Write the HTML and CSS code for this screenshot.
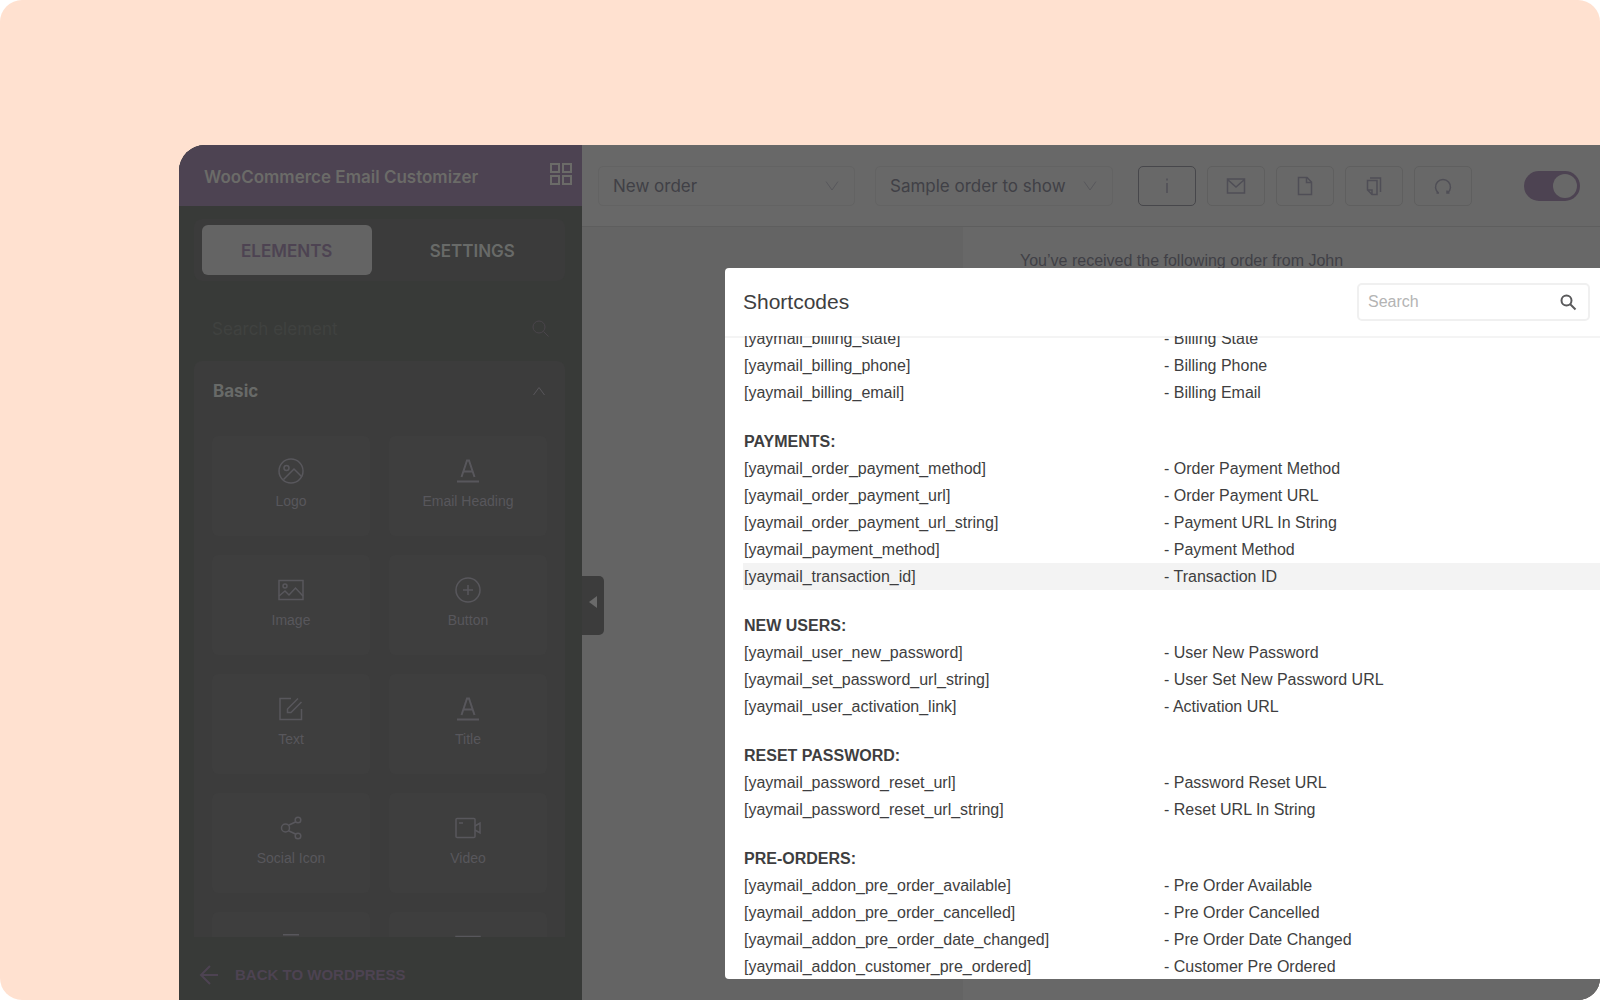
FILE: index.html
```html
<!DOCTYPE html>
<html lang="en">
<head>
<meta charset="utf-8">
<title>WooCommerce Email Customizer</title>
<link rel="stylesheet" href="styles.css">
</head>
<body>
<div class="stage">
  <div class="app">
    <aside class="sidebar">
      <header class="brand">
        <h1 class="brand-title">WooCommerce Email Customizer</h1>
        <button class="icon-button" type="button" aria-label="Templates">
          <svg width="22" height="22" viewBox="0 0 22 22" fill="none" stroke="currentColor" stroke-width="2"><path d="M1 1h8v8H1zM13 1h8v8h-8zM1 13h8v8H1zM13 13h8v8h-8z"/></svg>
        </button>
      </header>
      <div class="sidebar-body">
        <div class="tabs">
          <button class="tab tab-active" type="button">ELEMENTS</button>
          <button class="tab" type="button">SETTINGS</button>
        </div>
        <div class="element-search">
          <input class="element-input" type="text" placeholder="Search element" aria-label="Search element">
          <svg width="17" height="17" viewBox="0 0 17 17" fill="none" stroke="currentColor" stroke-width="1"><circle cx="7" cy="7" r="6"/><path d="M11.500 11.500L16.500 16.500"/></svg>
        </div>
        <section class="panel">
          <button class="panel-head" type="button">Basic
            <svg width="12" height="10" viewBox="0 0 12 10" fill="none" stroke="currentColor" stroke-width="1"><path d="M.5 9L6 1.500 11.500 9"/></svg>
          </button>
          <div class="elements">
            <button class="element" type="button">
              <svg class="element-icon" viewBox="0 0 26 26"><circle cx="13" cy="13" r="12"/><circle cx="8.500" cy="10" r="2.500"/><path d="M5.500 21.500L16 11l8 8"/></svg>Logo</button>
            <button class="element" type="button">
              <svg class="element-icon" viewBox="0 0 26 26"><path stroke-width="2" d="M6.500 19L12 2.500h2L19.500 19M8.500 13.500h9M2 23.500h22"/></svg>Email Heading</button>
            <button class="element" type="button">
              <svg class="element-icon" viewBox="0 0 26 26"><rect x="1" y="3.500" width="24" height="19"/><circle cx="7" cy="9" r="2"/><path d="M1 19l6-5 4 4 6.500-7L25 19"/></svg>Image</button>
            <button class="element" type="button">
              <svg class="element-icon" viewBox="0 0 26 26"><circle cx="13" cy="13" r="12"/><path d="M13 8v10M8 13h10"/></svg>Button</button>
            <button class="element" type="button">
              <svg class="element-icon" viewBox="0 0 26 26"><path d="M13 2.500H2v21h21.500V13M23.500 6L13 16.500H9.500V13L20 2.500"/></svg>Text</button>
            <button class="element" type="button">
              <svg class="element-icon" viewBox="0 0 26 26"><path stroke-width="2" d="M6.500 19L12 2.500h2L19.500 19M8.500 13.500h9M2 23.500h22"/></svg>Title</button>
            <button class="element" type="button">
              <svg class="element-icon" viewBox="0 0 26 26"><circle cx="7.500" cy="13" r="4"/><circle cx="20" cy="5" r="2.800"/><circle cx="20" cy="21" r="2.800"/><path d="M10.500 10.300L18 6.700M10.500 15.700L18 19.300"/></svg>Social Icon</button>
            <button class="element" type="button">
              <svg class="element-icon" viewBox="0 0 26 26"><rect x="1" y="3.500" width="19" height="19" rx="1"/><path d="M4 8h4M20 11l5-3v10l-5-3"/></svg>Video</button>
            <button class="element" type="button" aria-label="Divider">
              <svg class="element-icon" viewBox="0 0 26 26"><path d="M5 .8h16M5 7h16M5 12h16"/></svg></button>
            <button class="element" type="button" aria-label="Columns">
              <svg class="element-icon" viewBox="0 0 26 26"><rect x="1" y="2.500" width="24" height="19"/></svg></button>
          </div>
        </section>
      </div>
      <footer class="sidebar-foot">
        <a class="back-link" href="#">
          <svg width="20" height="20" viewBox="0 0 20 20" fill="none" stroke="currentColor" stroke-width="2"><path d="M19 10H2M11 1L2 10l9 9"/></svg>
          BACK TO WORDPRESS
        </a>
      </footer>
    </aside>

    <main class="workspace">
      <div class="toolbar">
        <div class="select select-template">
          <select aria-label="Email template"><option>New order</option></select>
          <svg class="chevron" viewBox="0 0 14 10"><path d="M1 .5l6 8.500 6-8.500"/></svg>
        </div>
        <div class="select select-order">
          <select aria-label="Sample order"><option>Sample order to show</option></select>
          <svg class="chevron" viewBox="0 0 14 10"><path d="M1 .5l6 8.500 6-8.500"/></svg>
        </div>
        <div class="tools">
          <button class="tool tool-active" type="button" aria-label="Shortcodes"><svg viewBox="0 0 20 20"><path d="M10 7v10M10 2.500v2"/></svg></button>
          <button class="tool" type="button" aria-label="Send test email"><svg viewBox="0 0 20 20"><path d="M1.500 3h17v14h-17zM1.500 3.500L10 11l8.500-7.500"/></svg></button>
          <button class="tool" type="button" aria-label="Blank page"><svg viewBox="0 0 20 20"><path d="M3.500 1.500H12L16.500 6v12.500h-13zM11.500 1.500v5h5"/></svg></button>
          <button class="tool" type="button" aria-label="Copy template"><svg viewBox="0 0 20 20"><path d="M3.500 4.500H13v14H8L3.500 14zM3.500 14H8v4.500M6 2h10.500v14"/></svg></button>
          <button class="tool" type="button" aria-label="Reset"><svg viewBox="0 0 20 20"><path d="M5.500 17A7.500 7.500 0 1 1 14.500 17M3.500 17h2.500M14 14.500V17h2.500"/></svg></button>
        </div>
        <input class="switch" type="checkbox" aria-label="Enable email" checked>
      </div>
      <div class="canvas">
        <div class="mail"><p class="mail-text">You’ve received the following order from John</p></div>
      </div>
      <button class="collapse" type="button" aria-label="Collapse sidebar"><svg width="8" height="12" viewBox="0 0 8 12" fill="currentColor"><path d="M8 0v12L0 6z"/></svg></button>
    </main>

    <section class="modal" role="dialog" aria-labelledby="modal-title">
      <header class="modal-head">
        <h2 class="modal-title" id="modal-title">Shortcodes</h2>
        <div class="modal-search">
          <input type="text" placeholder="Search" aria-label="Search shortcodes">
          <svg width="17" height="17" viewBox="0 0 17 17" fill="none" stroke="currentColor" stroke-width="2"><circle cx="6.500" cy="6.500" r="5"/><path d="M10 10L15.500 15.500"/></svg>
        </div>
      </header>
      <div class="modal-body">
        <table class="codes">
          <tbody>
            <tr><td>[yaymail_billing_state]</td><td>- Billing State</td></tr>
            <tr><td>[yaymail_billing_phone]</td><td>- Billing Phone</td></tr>
            <tr><td>[yaymail_billing_email]</td><td>- Billing Email</td></tr>
          </tbody>
          <tbody>
            <tr><th colspan="2">PAYMENTS:</th></tr>
            <tr><td>[yaymail_order_payment_method]</td><td>- Order Payment Method</td></tr>
            <tr><td>[yaymail_order_payment_url]</td><td>- Order Payment URL</td></tr>
            <tr><td>[yaymail_order_payment_url_string]</td><td>- Payment URL In String</td></tr>
            <tr><td>[yaymail_payment_method]</td><td>- Payment Method</td></tr>
            <tr class="row-hover"><td>[yaymail_transaction_id]</td><td>- Transaction ID</td></tr>
          </tbody>
          <tbody>
            <tr><th colspan="2">NEW USERS:</th></tr>
            <tr><td>[yaymail_user_new_password]</td><td>- User New Password</td></tr>
            <tr><td>[yaymail_set_password_url_string]</td><td>- User Set New Password URL</td></tr>
            <tr><td>[yaymail_user_activation_link]</td><td>- Activation URL</td></tr>
          </tbody>
          <tbody>
            <tr><th colspan="2">RESET PASSWORD:</th></tr>
            <tr><td>[yaymail_password_reset_url]</td><td>- Password Reset URL</td></tr>
            <tr><td>[yaymail_password_reset_url_string]</td><td>- Reset URL In String</td></tr>
          </tbody>
          <tbody>
            <tr><th colspan="2">PRE-ORDERS:</th></tr>
            <tr><td>[yaymail_addon_pre_order_available]</td><td>- Pre Order Available</td></tr>
            <tr><td>[yaymail_addon_pre_order_cancelled]</td><td>- Pre Order Cancelled</td></tr>
            <tr><td>[yaymail_addon_pre_order_date_changed]</td><td>- Pre Order Date Changed</td></tr>
            <tr><td>[yaymail_addon_customer_pre_ordered]</td><td>- Customer Pre Ordered</td></tr>
          </tbody>
        </table>
      </div>
    </section>
  </div>
</div>
</body>
</html>
```
FILE: styles.css
```css
* { box-sizing: border-box; }
body { margin: 0; background: #fff; font-family: "Liberation Sans", Arial, sans-serif; font-size: 16px; }
h1, h2, p { margin: 0; }
button, input, select { font: inherit; color: inherit; border: 0; background: none; padding: 0; }

.stage { height: 100vh; display: flex; padding: 145px 0 0 179px; background: #ffe1d0; border-radius: 22px; overflow: hidden; }
.app { position: relative; flex: 1; min-width: 0; display: flex; border-top-left-radius: 26px; overflow: hidden; background: #686868; }

/* Sidebar */
.sidebar { flex: none; width: 403px; display: flex; flex-direction: column; background: #383a38; color: #686a68; }
.brand { flex: none; height: 61px; display: flex; align-items: center; justify-content: space-between; padding: 0 10px 0 25px; background: #4d4352; color: #6b6b68; }
.brand-title { padding-top: 2px; font: 600 17px/24px Inter, sans-serif; }
.icon-button { display: flex; height: 26px; }
.sidebar-body { flex: 1; min-height: 0; display: flex; flex-direction: column; padding: 13px 17px 0 15px; overflow: hidden; }
.tabs { flex: none; height: 62px; display: flex; gap: 16px; padding: 6px 8px; border-radius: 8px; background: #3b3b3b; }
.tab { flex: 1; padding-top: 2px; border-radius: 6px; font: 600 17px/24px Inter, sans-serif; }
.tab-active { background: #646464; color: #4d4352; }
.element-search { flex: none; height: 80px; display: flex; align-items: center; padding: 14px 16px 0 18px; color: #4a454b; }
.element-input { flex: 1; min-width: 0; padding-top: 2px; font: 17px/24px Inter, sans-serif; }
.element-input::placeholder { color: #404240; opacity: 1; }
.panel { flex: 1; min-height: 0; overflow: hidden; padding: 0 18px; border-radius: 8px 8px 0 0; background: #3c3c3c; }
.panel-head { width: 100%; height: 75px; display: flex; align-items: center; justify-content: space-between; padding: 0 2px 16px 1px; font: 700 17px/24px Inter, sans-serif; }
.panel-head svg { color: #58565a; }
.elements { display: grid; grid-template-columns: 1fr 1fr; grid-auto-rows: 100px; gap: 19px; }
.element { display: flex; flex-direction: column; align-items: center; gap: 7px; padding-top: 22px; border-radius: 6px; background: #3e3e3e; color: #58575c; font-size: 14px; line-height: 20px; }
.element-icon { width: 26px; height: 26px; fill: none; stroke: currentColor; stroke-width: 1.5; }
.sidebar-foot { flex: none; height: 63px; display: flex; align-items: center; padding: 12px 20px 0; }
.back-link { display: flex; align-items: center; gap: 16px; color: #4d4352; font-size: 15px; font-weight: 700; text-decoration: none; }

/* Workspace */
.workspace { position: relative; flex: 1; min-width: 0; display: flex; flex-direction: column; color: #404046; }
.toolbar { flex: none; height: 82px; display: flex; align-items: center; padding: 0 20px 0 16px; border-bottom: 1px solid #5e5e5e; background: #686868; }
.select { position: relative; height: 40px; border: 1px solid #636363; border-radius: 5px; }
.select-template { width: 257px; margin-right: 20px; }
.select-order { width: 238px; margin-right: 25px; }
.select select { width: 100%; height: 100%; padding: 0 14px; appearance: none; font: 17px/24px Inter, sans-serif; }
.chevron { position: absolute; right: 15px; top: 14px; width: 14px; height: 10px; fill: none; stroke: #58585c; pointer-events: none; }
.tools { display: flex; gap: 11px; margin-right: auto; }
.tool { width: 58px; height: 40px; display: flex; align-items: center; justify-content: center; border: 1px solid #5f5f5f; border-radius: 5px; color: #4f4e56; }
.tool-active { border-color: #47474b; }
.tool svg { width: 20px; height: 20px; fill: none; stroke: currentColor; stroke-width: 1.5; }
.switch { appearance: none; margin: 0; width: 56px; height: 30px; display: flex; justify-content: flex-end; padding: 3px; border-radius: 15px; background: #4d4352; }
.switch::before { content: ""; width: 24px; height: 24px; border-radius: 50%; background: #686868; }
.canvas { flex: 1; display: flex; padding-left: 381px; background: #646464; }
.mail { flex: 1; background: #686868; padding: 22px 57px; }
.mail-text { font-size: 16px; line-height: 24px; }
.collapse { position: absolute; left: 0; top: 431px; width: 22px; height: 59px; display: flex; align-items: center; justify-content: center; border-radius: 0 5px 5px 0; background: #3c3c3c; color: #6a6a6a; padding-bottom: 8px; }

/* Shortcodes dialog */
.modal { position: absolute; left: 546px; right: 0; top: 123px; bottom: 21px; display: flex; flex-direction: column; border-radius: 4px 0 0 4px; background: #fff; color: #3e3e40; overflow: hidden; }
.modal-head { flex: none; height: 68px; display: flex; align-items: center; justify-content: space-between; padding: 0 10px 0 18px; }
.modal-title { font-size: 21px; line-height: 28px; font-weight: 400; }
.modal-search { width: 233px; height: 38px; display: flex; align-items: center; padding: 0 11px 0 9px; border: 2px solid #f0f0f0; border-radius: 5px; color: #5a5a5c; }
.modal-search input { flex: 1; min-width: 0; }
.modal-search input::placeholder { color: #b4b4b4; opacity: 1; }
.modal-body { flex: 1; min-height: 0; display: flex; flex-direction: column; justify-content: flex-end; padding-left: 18px; overflow: hidden; box-shadow: inset 0 2px #f4f4f4; }
.codes { width: 100%; margin-bottom: -1px; table-layout: fixed; border-collapse: collapse; line-height: 27px; }
.codes td, .codes th { padding: 0 0 0 1px; text-align: left; white-space: nowrap; }
.codes td:first-child { width: 420px; }
.codes th { padding-top: 22px; }
.row-hover { background: #f3f3f3; }
```
